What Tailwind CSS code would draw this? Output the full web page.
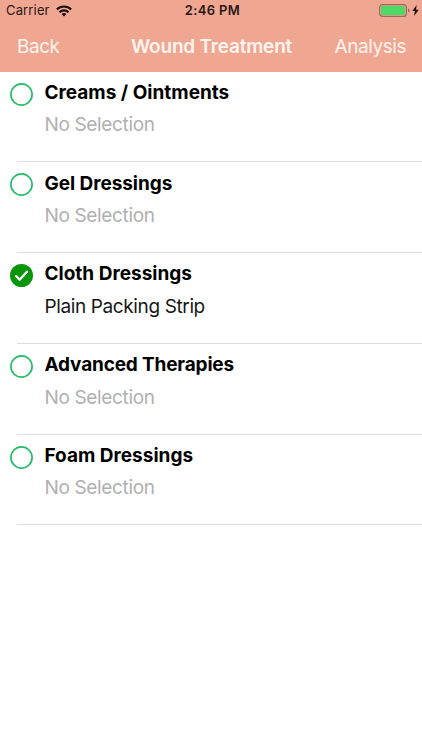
<!DOCTYPE html>
<html lang="en">
<head>
<meta charset="utf-8">
<title>Wound Treatment</title>
<script src="https://cdn.jsdelivr.net/npm/@tailwindcss/browser@4"></script>
</head>
<body class="w-[422px] h-[750px] overflow-hidden bg-white text-black font-['Inter','Liberation_Sans',sans-serif] whitespace-nowrap">
<header class="h-[71.5px] bg-[#efa792]">
  <div class="grid grid-cols-[1fr_auto_1fr] items-center h-[21px] pl-1.5 pr-[3px] text-[13px] leading-[21px] text-[#2b1712]">
    <div class="flex items-center gap-[6px]">
      <span class="tracking-[0.15px]">Carrier</span>
      <svg class="w-4 h-3" viewBox="0 0 16 12" fill="none" stroke="#1c0e0a" stroke-width="2.1"><path d="M.8 4.5a10.2 10.2 0 0 1 14.4 0M3.5 7.2a6.4 6.4 0 0 1 9 0"/><path d="M8 11.5 5.6 9.1a3.4 3.4 0 0 1 4.8 0z" fill="#1c0e0a" stroke="none"/></svg>
    </div>
    <span class="font-semibold tracking-[0.35px]">2:46 PM</span>
    <div class="flex items-center justify-end gap-[2px]">
      <svg class="w-[31px] h-[13px]" viewBox="0 0 31 13"><rect x=".6" y=".6" width="26.8" height="11.8" rx="3" fill="none" stroke="#9c6a59" stroke-width="1.2"/><rect x="2" y="2" width="24" height="9" rx="1.5" fill="#4cd964"/><path d="M29 4.5q1.600.7 1.600 2T29 8.500z" fill="#9c6a59"/></svg>
      <svg class="w-[7px] h-[11px]" viewBox="0 0 7 11"><path d="M4.700 0 .3 6H3L2 11 6.800 4.700H4z" fill="#1c0e0a"/></svg>
    </div>
  </div>
  <nav class="grid grid-cols-[1fr_auto_1fr] items-center h-[53px] pl-[17px] pr-4 text-[19px] tracking-[-0.45px] text-[#fff3ee]">
    <span>Back</span>
    <h1 class="font-semibold tracking-[-0.2px]">Wound Treatment</h1>
    <span class="text-right">Analysis</span>
  </nav>
</header>
<main>
  <section class="flex h-[90.75px] pl-2.5">
    <svg class="w-[23px] h-[23px] mt-[11px] mr-[11.5px]" viewBox="0 0 23 23"><circle cx="11.500" cy="11.500" r="10.600" fill="none" stroke="#22bd67" stroke-width="1.700"/></svg>
    <div class="text-[19px] leading-6 pt-[9px]"><h2 class="font-bold">Creams / Ointments</h2><p class="mt-[8.5px] tracking-[-0.35px] text-[#b0b0b0]">No Selection</p></div>
  </section>
  <section class="relative flex h-[90.75px] pl-2.5">
    <div class="absolute left-[17px] right-0 top-[-1px] h-px bg-[#dedede]"></div>
    <svg class="w-[23px] h-[23px] mt-[11px] mr-[11.5px]" viewBox="0 0 23 23"><circle cx="11.500" cy="11.500" r="10.600" fill="none" stroke="#22bd67" stroke-width="1.700"/></svg>
    <div class="text-[19px] leading-6 pt-[9.300px]"><h2 class="font-bold tracking-[-0.05px]">Gel Dressings</h2><p class="mt-[8.5px] tracking-[-0.35px] text-[#b0b0b0]">No Selection</p></div>
  </section>
  <section class="relative flex h-[90.75px] pl-2.5">
    <div class="absolute left-[17px] right-0 top-[-1px] h-px bg-[#dedede]"></div>
    <svg class="w-[23px] h-[23px] mt-[11px] mr-[11.5px]" viewBox="0 0 23 23"><circle cx="11.500" cy="11.500" r="11.500" fill="#089508"/><path d="m6 12 3.700 3.700 7.300-8" fill="none" stroke="#fff" stroke-width="2.300" stroke-linecap="round" stroke-linejoin="round"/></svg>
    <div class="text-[19px] leading-6 pt-[9px]"><h2 class="font-bold">Cloth Dressings</h2><p class="mt-[8.5px] tracking-[-0.38px] text-[#161616]">Plain Packing Strip</p></div>
  </section>
  <section class="relative flex h-[90.75px] pl-2.5">
    <div class="absolute left-[17px] right-0 top-[-1px] h-px bg-[#dedede]"></div>
    <svg class="w-[23px] h-[23px] mt-[11px] mr-[11.5px]" viewBox="0 0 23 23"><circle cx="11.500" cy="11.500" r="10.600" fill="none" stroke="#22bd67" stroke-width="1.700"/></svg>
    <div class="text-[19px] leading-6 pt-[9px]"><h2 class="font-bold tracking-[-0.16px]">Advanced Therapies</h2><p class="mt-[9px] tracking-[-0.35px] text-[#b0b0b0]">No Selection</p></div>
  </section>
  <section class="relative flex h-[90.75px] pl-2.5">
    <div class="absolute left-[17px] right-0 top-[-1px] h-px bg-[#dedede]"></div>
    <svg class="w-[23px] h-[23px] mt-[11px] mr-[11.5px]" viewBox="0 0 23 23"><circle cx="11.500" cy="11.500" r="10.600" fill="none" stroke="#22bd67" stroke-width="1.700"/></svg>
    <div class="text-[19px] leading-6 pt-[9px]"><h2 class="font-bold">Foam Dressings</h2><p class="mt-[8.5px] tracking-[-0.35px] text-[#b0b0b0]">No Selection</p></div>
  </section>
  <div class="ml-[17px] -mt-px h-px bg-[#dedede]"></div>
</main>
</body>
</html>
